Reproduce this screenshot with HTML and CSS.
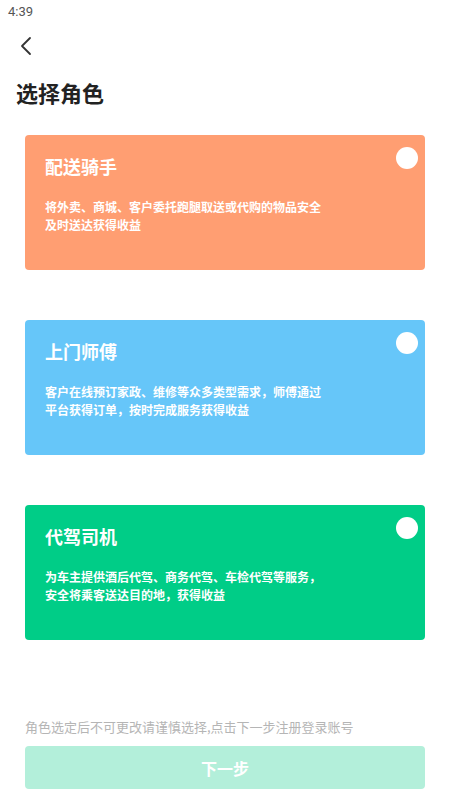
FILE: index.html
```html
<!DOCTYPE html>
<html lang="zh-CN">
<head>
<meta charset="utf-8">
<link rel="stylesheet" href="styles.css">
</head>
<body>
<div class="page">
  <div class="status">4:39</div>
  <div class="nav">
    <svg class="back" width="14" height="20" viewBox="0 0 14 20"><path d="M11 2 L3 10 L11 18" fill="none" stroke="#333" stroke-width="1.8" stroke-linecap="round" stroke-linejoin="round"/></svg>
  </div>
  <h1 class="title">选择角色</h1>
  <div class="cards">
    <div class="card orange">
      <span class="radio"></span>
      <div class="card-title">配送骑手</div>
      <div class="card-desc">将外卖、商城、客户委托跑腿取送或代购的物品安全<br>及时送达获得收益</div>
    </div>
    <div class="card blue">
      <span class="radio"></span>
      <div class="card-title">上门师傅</div>
      <div class="card-desc">客户在线预订家政、维修等众多类型需求，师傅通过<br>平台获得订单，按时完成服务获得收益</div>
    </div>
    <div class="card green">
      <span class="radio"></span>
      <div class="card-title">代驾司机</div>
      <div class="card-desc">为车主提供酒后代驾、商务代驾、车检代驾等服务，<br>安全将乘客送达目的地，获得收益</div>
    </div>
  </div>
  <div class="tip">角色选定后不可更改请谨慎选择,点击下一步注册登录账号</div>
  <div class="btn">下一步</div>
</div>
</body>
</html>
```

FILE: styles.css
```css
* { box-sizing: border-box; }
html, body { margin: 0; padding: 0; background: #fff; }
body {
  font-family: "Noto Sans CJK SC", "Noto Sans", Roboto, sans-serif;
  color: #222;
}
.page { width: 450px; height: 800px; display: flex; flex-direction: column; }
.status {
  height: 24px; line-height: 24px; padding-left: 8px;
  font-family: Roboto, "Noto Sans", sans-serif; font-size: 13px; color: #555;
}
.nav { height: 44px; display: flex; align-items: center; padding-left: 19px; }
.back { display: block; }
.title {
  margin: 9px 0 0 16px; font-size: 22px; line-height: 30px; font-weight: 700; color: #222;
}
.cards { display: flex; flex-direction: column; gap: 50px; margin: 28px 25px 0; }
.card {
  position: relative; height: 135px; border-radius: 4px; padding: 18px 20px 0;
  color: #fff;
}
.orange { background: #ff9e72; }
.blue { background: #66c6f9; }
.green { background: #00cd87; }
.radio {
  position: absolute; top: 12px; right: 7px; width: 22px; height: 22px;
  border-radius: 50%; background: #fff;
}
.card-title { font-size: 18px; line-height: 26px; font-weight: 700; }
.card-desc { margin-top: 19px; font-size: 12px; line-height: 18px; font-weight: 700; }
.tip {
  margin: 78px 25px 0; font-size: 13px; line-height: 18px; color: #b5b5b5;
}
.btn {
  margin: 10px 25px 0; height: 43px; border-radius: 4px; background: #b3efda;
  color: #fff; font-size: 16px; font-weight: 700; display: flex; align-items: center; justify-content: center;
}
```
